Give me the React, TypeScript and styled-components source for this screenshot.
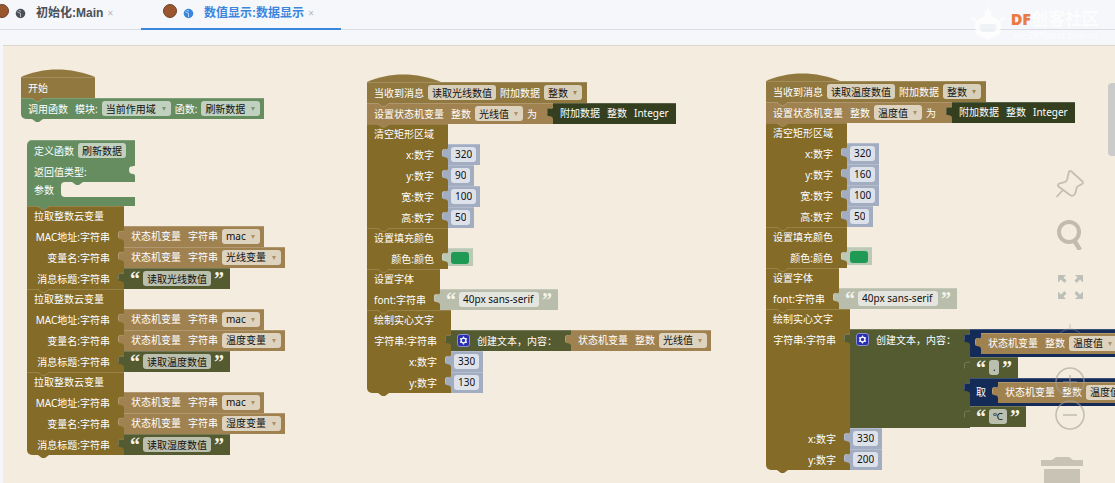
import React, { ReactNode } from "react";
import styled, { createGlobalStyle } from "styled-components";

const tones = {
  brown: { bg: "#846b27", field: "#d6cfba" },
  event: { bg: "#91783f", field: "#d9d0bb" },
  tan: { bg: "#a08250", field: "#ddd3bf" },
  green: { bg: "#658d60", field: "#c1d1bf" },
  olive: { bg: "#545b30", field: "#bbbfae" },
  forest: { bg: "#333f1f", field: "#b0b5a8" },
  steel: { bg: "#a3adc1", field: "#dde2ea" },
  sage: { bg: "#bcc9b5", field: "#e4e9e1" },
  ash: { bg: "#b9bdab", field: "#e4e5df" },
  navy: { bg: "#142b58", field: "#a8b0c0" },
};
type Tone = keyof typeof tones;

const Global = createGlobalStyle`
  * { box-sizing: border-box; }
  body { margin: 0; background: #f5f7fa; }
  body, button, input, select {
    font-family: "Noto Sans", "Noto Sans CJK SC", sans-serif;
    font-size: 10px;
  }
`;

const Page = styled.div`
  display: flex;
  flex-direction: column;
  min-height: 100vh;
  overflow: hidden;
`;

const TabBar = styled.nav`
  position: relative;
  display: flex;
  gap: 10px;
  height: 30px;
  margin-bottom: 15px;
  box-shadow: inset 0 -1px #d9dde3;
`;

const Tab = styled.div<{ $active?: boolean }>`
  display: flex;
  align-items: center;
  width: ${(p) => (p.$active ? 200 : 136)}px;
  margin-left: ${(p) => (p.$active ? 0 : -5)}px;
  padding: 0 0 2px ${(p) => (p.$active ? 22 : 0)}px;
  border-bottom: 2px solid ${(p) => (p.$active ? "#3a86df" : "transparent")};
  color: ${(p) => (p.$active ? "#3a86df" : "#4b4f57")};
`;

const Dot = styled.span`
  flex: none;
  width: 14px;
  height: 14px;
  margin-bottom: 4px;
  border-radius: 50%;
  border: 1px solid #70402a;
  background: #99562f;
`;

const TabLink = styled.a`
  display: flex;
  align-items: center;
  gap: 10px;
  margin-left: 6px;
  color: inherit;
  font: bold 12px/18px "Liberation Sans", "Noto Sans CJK SC", sans-serif;
  text-decoration: none;
  white-space: nowrap;
`;

const Close = styled.button`
  margin-left: 3px;
  padding: 0;
  width: 8px;
  border: 0;
  background: none;
  color: #b4b9c2;
  font-size: 10px;
  line-height: 12px;
`;

const Canvas = styled.main`
  position: relative;
  flex: 1;
  margin-left: 3px;
  overflow: hidden;
  border-top: 1px solid #dcd8d0;
  background: #f4ecde;
`;

const Stack = styled.section<{ $x: number; $y: number }>`
  position: absolute;
  left: ${(p) => p.$x}px;
  top: ${(p) => p.$y}px;
  display: flex;
  flex-direction: column;
  align-items: flex-start;
`;

const Hat = styled.svg`
  display: block;
  width: 74px;
  height: 9px;
  margin-bottom: -1px;
`;

const Statement = styled.div<{ $tone: Tone; $w: number; $last?: boolean; $first?: boolean }>`
  position: relative;
  width: ${(p) => p.$w}px;
  background: ${(p) => tones[p.$tone].bg};
  border-radius: ${(p) => (p.$first ? 5 : 0)}px 0 0 ${(p) => (p.$last ? 5 : 0)}px;
  box-shadow: inset 0 1px rgba(255, 255, 255, 0.16);
`;

const Notch = styled.svg`
  position: absolute;
  z-index: 1;
  left: 11px;
  top: 0;
  width: 11px;
  height: 4px;
`;

const Tail = styled(Notch)`
  top: 100%;
`;

const Row = styled.div<{ $h?: number }>`
  display: flex;
  align-items: flex-start;
  height: ${(p) => p.$h ?? 21}px;
`;

const Inline = styled.div<{ $w?: number; $h?: number }>`
  display: flex;
  flex: none;
  align-items: center;
  gap: 4px;
  width: ${(p) => (p.$w ? p.$w + "px" : "auto")};
  height: ${(p) => p.$h ?? 21}px;
  padding-left: 7px;
`;

const InputLabel = styled.div<{ $w: number }>`
  flex: none;
  width: ${(p) => p.$w}px;
  padding-right: 14px;
  color: #fff;
  line-height: 22px;
  text-align: right;
  white-space: nowrap;
`;

const Text = styled.span<{ $gap?: boolean }>`
  flex: none;
  margin-right: ${(p) => (p.$gap ? 3 : 0)}px;
  color: #fff;
  line-height: 20px;
  white-space: nowrap;
`;

const Value = styled.div<{ $tone: Tone; $h?: number }>`
  position: relative;
  display: flex;
  flex: none;
  align-items: flex-start;
  height: ${(p) => p.$h ?? 21}px;
  background: ${(p) => tones[p.$tone].bg};
  box-shadow: inset 0 1px rgba(255, 255, 255, 0.18);
`;

const Plug = styled.svg`
  position: absolute;
  z-index: 1;
  right: 100%;
  top: 4px;
  width: 6px;
  height: 12px;
`;

const ValueBody = styled.div<{ $pad?: number; $end?: number }>`
  display: flex;
  align-items: center;
  gap: 4px;
  height: 20px;
  padding: 0 ${(p) => p.$end ?? 4}px 0 ${(p) => p.$pad ?? 7}px;
`;

const TextField = styled.input<{ $tone: Tone; $w: number }>`
  flex: none;
  width: ${(p) => p.$w}px;
  height: 15px;
  padding: 0 4px;
  border: 0;
  border-radius: 3px;
  outline: 0;
  background: ${(p) => tones[p.$tone].field};
  color: #111;
`;

const DropBox = styled.span<{ $w: number }>`
  position: relative;
  display: flex;
  flex: none;
  width: ${(p) => p.$w}px;
`;

const DropSelect = styled.select<{ $tone: Tone }>`
  appearance: none;
  width: 100%;
  height: 15px;
  padding: 0 0 0 4px;
  border: 0;
  border-radius: 3px;
  outline: 0;
  background: ${(p) => tones[p.$tone].field};
  color: #111;
`;

const Caret = styled.svg`
  position: absolute;
  right: 5px;
  top: 6px;
  width: 4px;
  height: 4px;
  opacity: 0.8;
  pointer-events: none;
`;

const Quote = styled.span`
  flex: none;
  width: 8px;
  height: 20px;
  color: #f4f4ea;
  font: bold 20px/22px "Liberation Serif", serif;
  display: flex;
  justify-content: center;
`;

const Swatch = styled.button`
  width: 18px;
  height: 12px;
  padding: 0;
  border: 0;
  border-radius: 3px;
  background: #1f9a55;
`;

const GearButton = styled.button`
  display: flex;
  width: 13px;
  height: 13px;
  margin-right: 3px;
  padding: 0;
  border: 1px solid #8b8fd8;
  border-radius: 3px;
  background: #2a2fae;
`;

const JoinBody = styled.div`
  display: flex;
  flex: none;
  align-items: center;
  gap: 4px;
  width: 120px;
  height: 21px;
  padding-left: 6px;
`;

const Join = styled.div`
  display: flex;
`;

const Column = styled.div`
  display: flex;
  flex-direction: column;
  align-items: flex-start;
`;

const Nest = styled.div<{ $left: number }>`
  padding: 4px 5px 0 ${(p) => p.$left}px;
`;

const NestRow = styled.div`
  display: flex;
  padding-left: 6px;
  line-height: 28px;
`;

const NestText = styled(Text)`
  line-height: 28px;
`;

const Pocket = styled.div`
  position: relative;
  flex: 1;
  height: 15px;
  border-radius: 4px 0 0 4px;
  background: #f4ecde;
`;

const Socket = styled.svg`
  width: 6px;
  height: 11px;
  margin: 4px 0 0 auto;
`;

const Tools = styled.aside`
  position: absolute;
  z-index: 3;
  right: 30px;
  top: 123px;
  display: flex;
  flex-direction: column;
  align-items: flex-end;
  gap: 21px;
`;

const ZoomGroup = styled.div`
  display: flex;
  flex-direction: column;
  gap: 3px;
  opacity: 0.6;
`;

const ToolButton = styled.button<{ $h?: number; $wide?: boolean }>`
  display: block;
  width: ${(p) => (p.$wide ? 44 : 30)}px;
  height: ${(p) => p.$h ?? 30}px;
  padding: 0;
  border: 0;
  background: none;
  svg { display: block; }
`;

const ScrollThumb = styled.div`
  position: absolute;
  z-index: 3;
  right: 0;
  top: 37px;
  width: 7px;
  height: 73px;
  border-radius: 4px 0 0 4px;
  background: #cbcbc9;
`;

const Brand = styled.div`
  position: absolute;
  right: 16px;
  top: 5px;
  display: flex;
  gap: 6px;
`;

const BrandText = styled.div`
  padding-top: 4px;
  color: rgba(255, 255, 255, 0.75);
  font: bold 17px/20px "Noto Sans", "Noto Sans CJK SC", sans-serif;
  b { color: #ea7a42; font-size: 16px; }
  small { display: block; font: 9px/14px "Noto Sans", sans-serif; padding-left: 3px; }
`;

const NotchShape = ({ tone, tail }: { tone: Tone; tail?: boolean }) => {
  const props = { viewBox: "0 0 11 4", "aria-hidden": true } as const;
  const body = (
    <>
      <path d="M0 0 4 3H7L11 0Z" fill={tones[tone].bg} />
      {!tail && <path d="M0 .5 4 3.4H7L11 .5" fill="none" stroke="#fff" strokeOpacity=".22" strokeWidth=".8" />}
    </>
  );
  return tail ? <Tail {...props}>{body}</Tail> : <Notch {...props}>{body}</Notch>;
};

const PlugShape = ({ tone }: { tone: Tone }) => (
  <Plug viewBox="0 0 6 12" aria-hidden>
    <path d="M6 0C6 3.500 0 -1 0 3.500V7.500C0 10 6 8 6 12Z" fill={tones[tone].bg} />
    <path d="M6 0C6 3.500 .5 -1 .5 3.500V7.500" fill="none" stroke="#fff" strokeOpacity=".2" />
  </Plug>
);

const Drop = ({ tone, w, value, label }: { tone: Tone; w: number; value: string; label: string }) => (
  <DropBox $w={w}>
    <DropSelect $tone={tone} aria-label={label} defaultValue={value}>
      <option>{value}</option>
    </DropSelect>
    <Caret viewBox="0 0 4 4" aria-hidden>
      <path d="M0 0H4L2 4Z" fill={tones[tone].bg} />
    </Caret>
  </DropBox>
);

const StateVar = ({ type, name, w }: { type: string; name: string; w: number }) => (
  <Value $tone="tan">
    <PlugShape tone="tan" />
    <ValueBody>
      <Text $gap>状态机变量</Text>
      <Text>{type}</Text>
      <Drop tone="tan" w={w} value={name} label={type} />
    </ValueBody>
  </Value>
);

const Str = ({ text, w, tone = "olive" }: { text: string; w: number; tone?: Tone }) => (
  <Value $tone={tone}>
    <PlugShape tone={tone} />
    <ValueBody $end={7}>
      <Quote>“</Quote>
      <TextField $tone={tone} $w={w} defaultValue={text} aria-label="字符串" />
      <Quote>”</Quote>
    </ValueBody>
  </Value>
);

const Num = ({ n, label }: { n: number; label: string }) => (
  <Value $tone="steel">
    <PlugShape tone="steel" />
    <ValueBody $pad={3}>
      <TextField $tone="steel" $w={n > 99 ? 25 : 19} defaultValue={n} aria-label={label} />
    </ValueBody>
  </Value>
);

type Input = { label: string; value: ReactNode; h?: number };
type BlockProps = { title: string; w: number; prev: Tone; inputs: Input[]; last?: boolean };

const Block = ({ title, w, prev, inputs, last }: BlockProps) => (
  <Statement $tone="brown" $w={w} $last={last}>
    <NotchShape tone={prev} />
    <Row $h={20}>
      <Inline $h={20}>
        <Text>{title}</Text>
      </Inline>
    </Row>
    {inputs.map((i) => (
      <Row key={i.label} $h={i.h}>
        <InputLabel $w={w}>{i.label}</InputLabel>
        {i.value}
      </Row>
    ))}
    {last && <NotchShape tone="brown" tail />}
  </Statement>
);

const nums = (pairs: [string, number][]): Input[] =>
  pairs.map(([label, n]) => ({ label: label + ":数字", value: <Num n={n} label={label} /> }));

const CloudVar = ({ name, message, prev, last }: { name: string; message: string; prev: Tone; last?: boolean }) => (
  <Block
    title="拉取整数云变量"
    w={97}
    prev={prev}
    last={last}
    inputs={[
      { label: "MAC地址:字符串", value: <StateVar type="字符串" name="mac" w={38} /> },
      { label: "变量名:字符串", value: <StateVar type="字符串" name={name} w={59} /> },
      { label: "消息标题:字符串", value: <Str text={message} w={68} /> },
    ]}
  />
);

const HatShape = () => (
  <Hat viewBox="0 0 74 9" aria-hidden>
    <path d="M0 9V8C22 -2 50 -2 74 8V9Z" fill={tones.event.bg} />
  </Hat>
);

const JoinHead = () => (
  <JoinBody>
    <GearButton aria-label="选项">
      <svg viewBox="0 0 11 11" width="11" height="11">
        <circle cx="5.5" cy="5.5" r="2.4" fill="none" stroke="#fff" strokeWidth="1.3" />
        <path
          d="M5.5 1.500v1.300M5.5 8.200V9.500M2 3.500l1.200.7M7.800 6.800l1.200.7M2 7.500 3.200 6.800M7.800 4.200l1.200-.7"
          stroke="#fff"
          strokeWidth="1.2"
        />
      </svg>
    </GearButton>
    <Text>创建文本，内容：</Text>
  </JoinBody>
);

type HandlerProps = {
  x: number;
  y: number;
  message: string;
  variable: string;
  top: number;
  drawY: number;
  content: ReactNode;
  contentH?: number;
};

const Handler = ({ x, y, message, variable, top, drawY, content, contentH }: HandlerProps) => (
  <Stack $x={x} $y={y}>
    <HatShape />
    <Statement $tone="event" $w={220}>
      <Inline>
        <Text>当收到消息</Text>
        <TextField $tone="event" $w={68} defaultValue={message} aria-label="消息" />
        <Text>附加数据</Text>
        <Drop tone="event" w={38} value="整数" label="附加数据" />
      </Inline>
    </Statement>
    <Statement $tone="tan" $w={186}>
      <NotchShape tone="event" />
      <Row>
        <Inline $w={186}>
          <Text $gap>设置状态机变量</Text>
          <Text>整数</Text>
          <Drop tone="tan" w={48} value={variable} label="状态机变量" />
          <Text>为</Text>
        </Inline>
        <Value $tone="forest">
          <PlugShape tone="forest" />
          <ValueBody $end={7}>
            <Text $gap>附加数据</Text>
            <Text $gap>整数</Text>
            <Text>Integer</Text>
          </ValueBody>
        </Value>
      </Row>
    </Statement>
    <Block
      title="清空矩形区域"
      w={81}
      prev="tan"
      inputs={nums([["x", 320], ["y", top], ["宽", 100], ["高", 50]])}
    />
    <Block
      title="设置填充颜色"
      w={81}
      prev="brown"
      inputs={[
        {
          label: "颜色:颜色",
          value: (
            <Value $tone="sage" $h={18}>
              <PlugShape tone="sage" />
              <ValueBody $pad={3}>
                <Swatch aria-label="颜色" />
              </ValueBody>
            </Value>
          ),
        },
      ]}
    />
    <Block
      title="设置字体"
      w={73}
      prev="brown"
      inputs={[{ label: "font:字符串", value: <Str tone="ash" text="40px sans-serif" w={80} /> }]}
    />
    <Block
      title="绘制实心文字"
      w={84}
      prev="brown"
      last
      inputs={[{ label: "字符串:字符串", value: content, h: contentH }, ...nums([["x", 330], ["y", drawY]])]}
    />
  </Stack>
);

const Badge = () => (
  <svg viewBox="0 0 12 12" width="11" height="11" aria-hidden>
    <circle cx="6" cy="6" r="5.2" fill="currentColor" />
    <path d="M2.5 4.2 6 5.8M6 5.8V10M4 2.6 6.500 3.400" fill="none" stroke="#f5f7fa" strokeOpacity=".7" />
  </svg>
);

const RobotHead = () => (
  <svg width="34" height="38" viewBox="0 0 38 40" opacity=".8" aria-hidden>
    <path d="M19 9 33 17V31L19 38 5 31V17Z" fill="#fff" />
    <path d="M11 20H27L29 24 26 29H12L9 24Z" fill="#f0f3f6" />
    <path d="M18 1h2v8h-2ZM1 11l5 4-2 2-4-4ZM37 11l-5 4 2 2 4-4Z" fill="#fff" />
    <circle cx="19" cy="8" r="4" fill="#fff" />
  </svg>
);

export default function App() {
  return (
    <Page>
      <Global />
      <TabBar>
        <Tab>
          <Dot />
          <TabLink href="#main">
            <Badge />
            初始化:Main
          </TabLink>
          <Close aria-label="关闭">×</Close>
        </Tab>
        <Tab $active>
          <Dot />
          <TabLink href="#display">
            <Badge />
            数值显示:数据显示
          </TabLink>
          <Close aria-label="关闭">×</Close>
        </Tab>
        <Brand>
          <RobotHead />
          <BrandText>
            <b>DF</b>创客社区
            <small>mc.DFRobot.com.cn</small>
          </BrandText>
        </Brand>
      </TabBar>
      <Canvas>
        <Stack $x={18} $y={23}>
          <HatShape />
          <Statement $tone="event" $w={74}>
            <Inline>
              <Text>开始</Text>
            </Inline>
          </Statement>
          <Statement $tone="green" $w={243} $last>
            <NotchShape tone="event" />
            <Inline>
              <Text $gap>调用函数</Text>
              <Text>模块:</Text>
              <Drop tone="green" w={69} value="当前作用域" label="模块" />
              <Text>函数:</Text>
              <Drop tone="green" w={59} value="刷新数据" label="函数" />
            </Inline>
            <NotchShape tone="green" tail />
          </Statement>
        </Stack>

        <Stack $x={24} $y={94}>
          <Statement $tone="green" $w={108} $first>
            <Inline>
              <Text>定义函数</Text>
              <TextField $tone="green" $w={48} defaultValue="刷新数据" aria-label="函数名" />
            </Inline>
            <Row>
              <Inline>
                <Text>返回值类型:</Text>
              </Inline>
              <Socket viewBox="0 0 6 11" aria-hidden>
                <path d="M6 0C6 3 0 -1 0 5S6 7 6 11Z" fill="#f4ecde" />
              </Socket>
            </Row>
            <Row $h={24}>
              <Inline $w={34} $h={15}>
                <Text>参数</Text>
              </Inline>
              <Pocket>
                <NotchShape tone="green" />
              </Pocket>
            </Row>
          </Statement>
          <CloudVar name="光线变量" message="读取光线数值" prev="green" />
          <CloudVar name="温度变量" message="读取温度数值" prev="brown" />
          <CloudVar name="湿度变量" message="读取湿度数值" prev="brown" last />
        </Stack>

        <Handler
          x={364}
          y={28}
          message="读取光线数值"
          variable="光线值"
          top={90}
          drawY={130}
          content={
            <Value $tone="olive">
              <PlugShape tone="olive" />
              <JoinHead />
              <StateVar type="整数" name="光线值" w={48} />
            </Value>
          }
        />

        <Handler
          x={763}
          y={27}
          message="读取温度数值"
          variable="温度值"
          top={160}
          drawY={200}
          contentH={99}
          content={
            <Join>
              <Value $tone="olive" $h={99}>
                <PlugShape tone="olive" />
                <JoinHead />
              </Value>
              <Column>
                <Value $tone="navy" $h={28}>
                  <PlugShape tone="navy" />
                  <Nest $left={11}>
                    <StateVar type="整数" name="温度值" w={48} />
                  </Nest>
                </Value>
                <Str text="." w={10} />
                <Value $tone="navy" $h={28}>
                  <PlugShape tone="navy" />
                  <NestRow>
                    <NestText>取</NestText>
                    <Nest $left={12}>
                      <StateVar type="整数" name="温度值" w={48} />
                    </Nest>
                  </NestRow>
                </Value>
                <Str text="℃" w={18} />
              </Column>
            </Join>
          }
        />

        <Tools>
          <ToolButton aria-label="固定">
            <svg width="30" height="30" viewBox="0 0 30 30" fill="none" stroke="#c6beb1" strokeWidth="1.8" strokeLinejoin="round">
              <path d="M14 2.500Q15 1.500 16.500 2.500L27.500 12.500Q28.500 14 27 15L22.500 17.500C20.500 19 22 22 19.500 25.500Q17.500 28 15 26L3.500 17.500Q2 15.500 4.500 14.500C8 13 11 14 12 11Z" />
              <path d="M7.500 21.500 1.500 28" />
            </svg>
          </ToolButton>
          <ToolButton aria-label="搜索">
            <svg width="30" height="30" viewBox="0 0 30 30" fill="none" stroke="#c3bbae">
              <circle cx="14" cy="12" r="10" strokeWidth="4" />
              <path d="M19 20 25 30" strokeWidth="4.500" />
            </svg>
          </ToolButton>
          <ToolButton aria-label="全屏">
            <svg width="30" height="30" viewBox="0 0 30 30" fill="#bcc0b8">
              <path d="M3 4h8L8.500 6.500 11.500 9.500 9.500 12 6 8.500 3 11.500Z" />
              <path d="M28 4h-8l2.500 2.500-3 3 2 2.500L25 8.500l3 3Z" />
              <path d="M3 28h8L8.500 25.500l3-3-2-2.500L6 23.500 3 20.500Z" />
              <path d="M28 28h-8l2.500-2.500-3-3 2-2.500L25 23.500l3-3Z" />
            </svg>
          </ToolButton>
          <ZoomGroup>
            <ToolButton $h={42} aria-label="居中">
              <svg width="30" height="42" viewBox="0 0 30 42" fill="none" stroke="#999" strokeWidth="1.6" opacity=".5">
                <path d="M5 11Q15 3 25 11M15 2v6" />
              </svg>
            </ToolButton>
            <ToolButton aria-label="放大">
              <svg width="30" height="30" viewBox="0 0 30 30" fill="none" stroke="#a5a098" strokeWidth="1.6">
                <circle cx="15" cy="15" r="14" />
                <path d="M15 8v14M8 15h14" />
              </svg>
            </ToolButton>
            <ToolButton aria-label="缩小">
              <svg width="30" height="30" viewBox="0 0 30 30" fill="none" stroke="#a5a098" strokeWidth="1.6">
                <circle cx="15" cy="15" r="14" />
                <path d="M8 15h14" />
              </svg>
            </ToolButton>
          </ZoomGroup>
          <ToolButton $wide $h={44} aria-label="删除">
            <svg width="44" height="44" viewBox="0 0 44 44" fill="#c9c3b6">
              <path d="M0 9h11l4-3h13l4 3h10v6H0ZM3 18h36v26H3Z" />
            </svg>
          </ToolButton>
        </Tools>
        <ScrollThumb />
      </Canvas>
    </Page>
  );
}
